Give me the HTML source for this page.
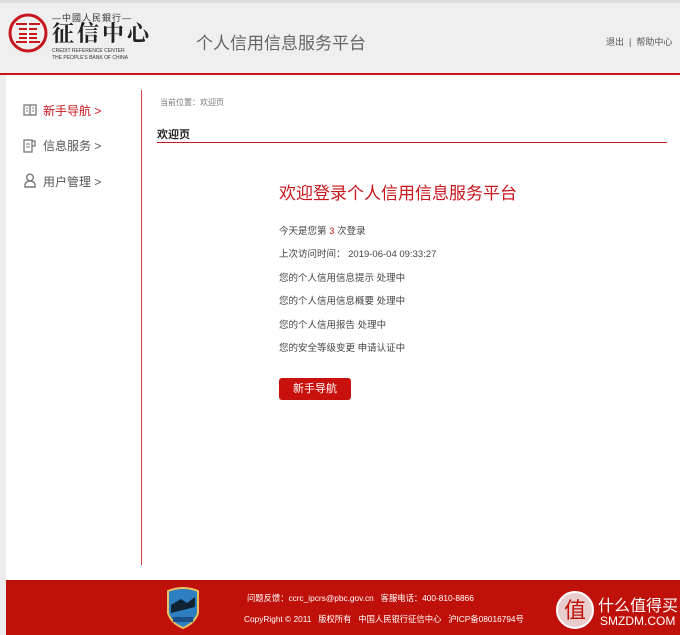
<!DOCTYPE html>
<html><head><meta charset="utf-8"><style>
*{margin:0;padding:0;box-sizing:border-box}
body{width:680px;height:635px;background:#ececec;font-family:"Liberation Sans","Noto Sans CJK SC",sans-serif;position:relative;overflow:hidden;color:#333}
.abs{position:absolute}
.hdr{left:0;top:0;width:680px;height:73px;background:#efefef;border-top:3px solid #dcdcdc}
.redline{left:0;top:73px;width:680px;height:2px;background:#c8161d}
.main{left:6px;top:75px;width:674px;height:505px;background:#fff}
.foot{left:6px;top:580px;width:674px;height:55px;background:#c0100a}
.t{white-space:nowrap}
</style></head><body>
<div class="abs hdr"></div>
<div class="abs redline"></div>
<svg class="abs" style="left:8px;top:13px" width="40" height="40" viewBox="0 0 40 40">
<circle cx="20" cy="20" r="18" fill="none" stroke="#c8161d" stroke-width="3"/>
<rect x="8" y="10" width="24" height="2" fill="#c8161d"/><rect x="8" y="28" width="24" height="2" fill="#c8161d"/>
<rect x="11" y="15" width="18" height="2" fill="#c8161d"/><rect x="11" y="20" width="18" height="2" fill="#c8161d"/><rect x="11" y="24" width="18" height="2" fill="#c8161d"/>
<rect x="19" y="8" width="2" height="24" fill="#fff"/>
</svg>
<div class="abs t" style="left:52px;top:11px;font-size:9px;color:#333;letter-spacing:1px">—中國人民銀行—</div>
<div class="abs t" style="left:52px;top:20px;font-size:22px;color:#222;font-family:'Noto Serif CJK SC',serif;font-weight:bold;letter-spacing:3px;line-height:26px">征信中心</div>
<div class="abs t" style="left:52px;top:48px;font-size:5px;color:#333;line-height:7px">CREDIT REFERENCE CENTER<br>THE PEOPLE'S BANK OF CHINA</div>
<div class="abs t" style="left:196px;top:29px;font-size:17px;color:#666">个人信用信息服务平台</div>
<div class="abs t" style="left:606px;top:35px;font-size:9px;color:#555">退出 &nbsp;| &nbsp;帮助中心</div>
<div class="abs main"></div>
<div class="abs" style="left:141px;top:90px;width:1px;height:475px;background:#d0454a"></div>
<svg class="abs" style="left:23px;top:104px" width="14" height="12" viewBox="0 0 14 12"><rect x="1" y="1" width="12" height="10" fill="none" stroke="#777" stroke-width="1.3"/><line x1="7" y1="1" x2="7" y2="11" stroke="#777" stroke-width="1.3"/><line x1="3" y1="4" x2="5" y2="4" stroke="#777"/><line x1="9" y1="4" x2="11" y2="4" stroke="#777"/><line x1="3" y1="7" x2="5" y2="7" stroke="#777"/><line x1="9" y1="7" x2="11" y2="7" stroke="#777"/></svg>
<div class="abs t" style="left:43px;top:102px;font-size:12px;color:#c8161d">新手导航 &gt;</div>
<svg class="abs" style="left:23px;top:139px" width="14" height="14" viewBox="0 0 14 14"><rect x="1" y="1" width="8" height="12" fill="none" stroke="#777" stroke-width="1.3"/><path d="M9 2h3v5h-3" fill="none" stroke="#777" stroke-width="1.3"/><line x1="3" y1="5" x2="7" y2="5" stroke="#777"/><line x1="3" y1="8" x2="7" y2="8" stroke="#777"/></svg>
<div class="abs t" style="left:43px;top:137px;font-size:12px;color:#555">信息服务 &gt;</div>
<svg class="abs" style="left:24px;top:173px" width="12" height="15" viewBox="0 0 12 15"><circle cx="6" cy="4.5" r="3.3" fill="none" stroke="#777" stroke-width="1.4"/><path d="M1 14v-2a5 4 0 0 1 10 0v2z" fill="none" stroke="#777" stroke-width="1.4"/></svg>
<div class="abs t" style="left:43px;top:173px;font-size:12px;color:#555">用户管理 &gt;</div>
<div class="abs t" style="left:160px;top:97px;font-size:8px;color:#777">当前位置：欢迎页</div>
<div class="abs t" style="left:157px;top:126px;font-size:11px;color:#222;font-weight:bold">欢迎页</div>
<div class="abs" style="left:157px;top:142px;width:510px;height:1px;background:#c8161d"></div>
<div class="abs t" style="left:279px;top:179px;font-size:17px;color:#c8161d">欢迎登录个人信用信息服务平台</div>
<div class="abs" style="left:279px;top:220px;font-size:9.5px;color:#444;line-height:23.4px">
今天是您第 <span style="color:#c8161d">3</span> 次登录<br>上次访问时间： 2019-06-04 09:33:27<br>您的个人信用信息提示 处理中<br>您的个人信用信息概要 处理中<br>您的个人信用报告 处理中<br>您的安全等级变更 申请认证中</div>
<div class="abs" style="left:279px;top:378px;width:72px;height:22px;background:#c8100d;border-radius:3px;color:#fff;font-size:11px;text-align:center;line-height:22px">新手导航</div>
<div class="abs foot"></div>
<svg class="abs" style="left:165px;top:587px" width="36" height="42" viewBox="0 0 36 42"><path d="M3 4q15-6 30 0v22q-3 10-15 15q-12-5-15-15z" fill="#2e7fc1" stroke="#e8c060" stroke-width="2"/><path d="M6 18l10-6 6 4 8-6v10l-24 6z" fill="#123"/><rect x="8" y="30" width="20" height="5" fill="#1a4f8a"/></svg>
<div class="abs t" style="left:247px;top:592px;font-size:8.3px;color:#fff">问题反馈：ccrc_ipcrs@pbc.gov.cn &nbsp;&nbsp;客服电话：400-810-8866</div>
<div class="abs t" style="left:244px;top:613px;font-size:8.3px;color:#fff">CopyRight © 2011 &nbsp;&nbsp;版权所有 &nbsp;&nbsp;中国人民银行征信中心 &nbsp;&nbsp;沪ICP备08016794号</div>
<svg class="abs" style="left:555px;top:590px" width="40" height="40" viewBox="0 0 40 40"><circle cx="20" cy="20" r="18" fill="#eee" fill-opacity="0.85" stroke="#fff" stroke-width="2"/><text x="20" y="28" font-size="22" text-anchor="middle" fill="#c0100a" font-family="Noto Sans CJK SC">值</text></svg>
<div class="abs t" style="left:598px;top:592px;font-size:16px;color:#fff">什么值得买</div>
<div class="abs t" style="left:600px;top:614px;font-size:12px;color:#fff">SMZDM.COM</div>
</body></html>
